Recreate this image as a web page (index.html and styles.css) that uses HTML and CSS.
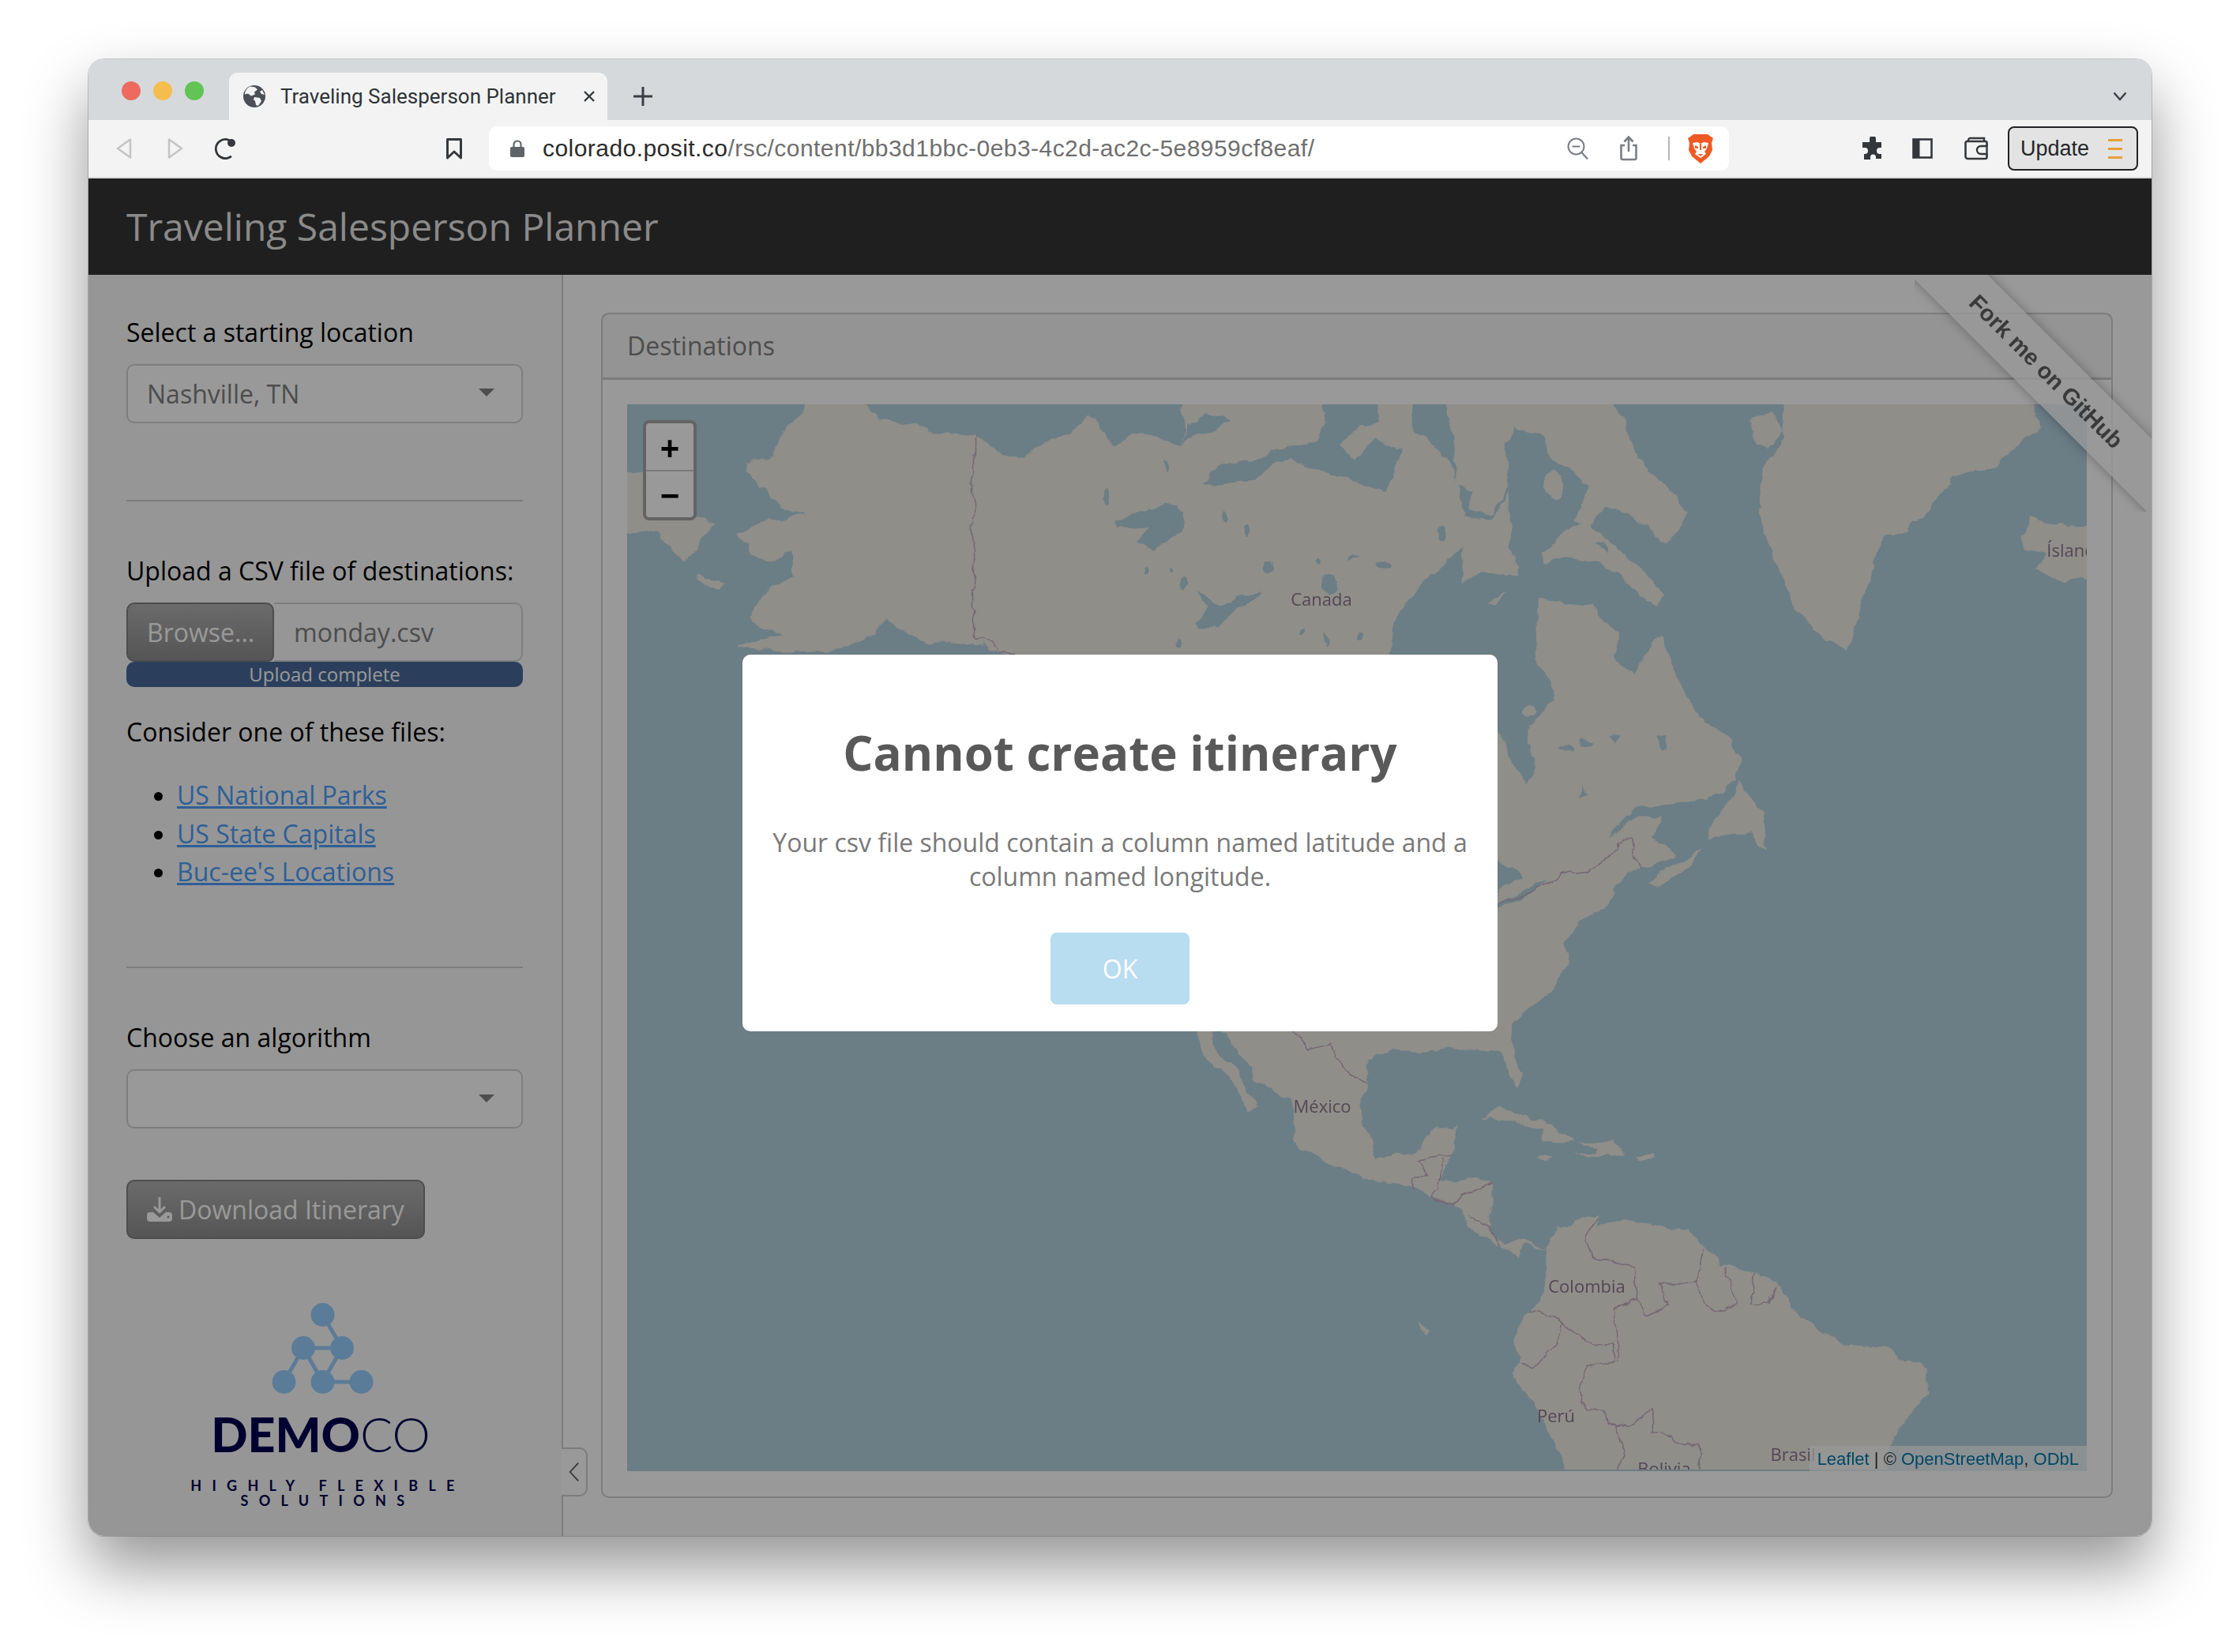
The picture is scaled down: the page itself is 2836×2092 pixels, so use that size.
FILE: index.html
```html
<!DOCTYPE html>
<html lang="en">
<head>
<meta charset="utf-8">
<title>Traveling Salesperson Planner</title>
<link rel="stylesheet" href="styles.css">
</head>
<body>
<div class="window">
  <div class="tabstrip">
    <span class="light red"></span><span class="light yellow"></span><span class="light green"></span>
    <div class="tab">
      <svg class="globe" viewBox="0 0 28 28"><circle cx="14" cy="14" r="14" fill="#4b5058"/><path d="M9 1.5l6 1 3 3-4 3 1 3-5 2-4-3-4 1C2 7 5 3 9 1.5zM14 15l7 1 2 4-4 6-3-1-1-5-2-2zM24 6l3 6-4-1-2-3z" fill="#f3f3f3"/></svg>
      <span class="tab-title">Traveling Salesperson Planner</span>
      <svg class="tab-x" viewBox="0 0 16 16"><path d="M2 2l12 12M14 2L2 14" stroke="#33373c" stroke-width="2.4" fill="none"/></svg>
    </div>
    <svg class="newtab" viewBox="0 0 24 24"><path d="M12 0v24M0 12h24" stroke="#3a3e43" stroke-width="3" fill="none"/></svg>
    <svg class="tabmenu" viewBox="0 0 18 12"><path d="M1.5 1.5L9 10l7.500-8.500" stroke="#3a3e43" stroke-width="2.400" fill="none"/></svg>
  </div>
  <div class="toolbar">
    <svg class="tb back" viewBox="0 0 20 26"><path d="M18 1.500v23L2 13z" fill="none" stroke="#c4c4c4" stroke-width="2.500" stroke-linejoin="round"/></svg>
    <svg class="tb fwd" viewBox="0 0 20 26"><path d="M2 1.500v23L18 13z" fill="none" stroke="#c4c4c4" stroke-width="2.500" stroke-linejoin="round"/></svg>
    <svg class="tb reload" viewBox="0 0 28 28"><path d="M21 24.500A12 12 0 1 1 19 3.500" fill="none" stroke="#34383d" stroke-width="2.800" stroke-linecap="round"/><circle cx="22" cy="7" r="5" fill="#34383d"/></svg>
    <svg class="tb bookmark" viewBox="0 0 22 28"><path d="M2.500 2.500h17V26L11 18l-8.500 8z" fill="none" stroke="#34383d" stroke-width="3" stroke-linejoin="round"/></svg>
    <div class="urlbar">
      <svg class="lock" viewBox="0 0 18 22"><path d="M4.500 10V6a4.500 4.500 0 0 1 9 0v4" fill="none" stroke="#5f6368" stroke-width="2.200"/><rect y="9" width="18" height="13" rx="2" fill="#5f6368"/></svg>
      <span class="url"><span class="host">colorado.posit.co</span>/rsc/content/bb3d1bbc-0eb3-4c2d-ac2c-5e8959cf8eaf/</span>
      <svg class="tb zoomout" viewBox="0 0 28 28"><circle cx="11.500" cy="11.500" r="10" fill="none" stroke="#7a7e83" stroke-width="2"/><path d="M6.500 11.500h10M18.500 19l7.500 8.500" stroke="#7a7e83" stroke-width="2.200" fill="none"/></svg>
      <svg class="tb share" viewBox="0 0 24 32"><path d="M12 20V2M6.500 7.500L12 1.500l5.500 6M7 12H2.500v16a2 2 0 0 0 2 2h15a2 2 0 0 0 2-2V12H17" fill="none" stroke="#7a7e83" stroke-width="2.600"/></svg>
      <span class="url-sep"></span>
      <svg class="tb brave" viewBox="0 0 32 38"><path d="M7 1h18l4 3 3 2-2 6 1 9-4 8-11 9-11-9-4-8 1-9L0 6l3-2z" fill="#ef5a24"/><path d="M6 12l6-1 4 2 4-2 6 1-2 7-3 4 2 3-7 5-7-5 2-3-3-4z" fill="#fff"/><path d="M9 15l4 2v2H9zM23 15l-4 2v2h4zM13 26h6l-3 3zM15 13h2v8h-2z" fill="#ef5a24"/></svg>
    </div>
    <svg class="tb puzzle" viewBox="0 0 28 30"><path d="M10 3a4 4 0 0 1 8 0v4h7v7h-2a3.500 3.500 0 0 0 0 8h2v6h-7v-2a3.500 3.500 0 0 0-7 0v3H3v-7h1a4 4 0 0 0 0-8H1V7h9z" fill="#33373c"/></svg>
    <svg class="tb sidepanel" viewBox="0 0 26 26"><rect x="1.500" y="1.500" width="23" height="23" fill="none" stroke="#33373c" stroke-width="2.600"/><rect x="1.500" y="1.500" width="8" height="23" fill="#33373c"/></svg>
    <svg class="tb wallet" viewBox="0 0 30 30"><path d="M5 6V4.500A2.500 2.500 0 0 1 7.500 2H25v4" fill="none" stroke="#33373c" stroke-width="2.400"/><path d="M1.500 8v17a3 3 0 0 0 3 3h22a2 2 0 0 0 2-2v-4M1.500 8a2 2 0 0 1 2-2h23a2 2 0 0 1 2 2v4" fill="none" stroke="#33373c" stroke-width="2.600"/><path d="M28.500 12H21a5 5 0 0 0 0 10h7.500z" fill="none" stroke="#33373c" stroke-width="2.400"/></svg>
    <div class="update"><span>Update</span><i class="burger"></i></div>
  </div>

  <div class="app">
    <header class="app-head">Traveling Salesperson Planner</header>
    <div class="app-body">
      <aside class="sidebar">
        <label class="lbl first">Select a starting location</label>
        <div class="select"><span>Nashville, TN</span><i class="caret"></i></div>
        <hr class="rule one">
        <label class="lbl">Upload a CSV file of destinations:</label>
        <div class="file"><span class="browse">Browse...</span><span class="fname">monday.csv</span></div>
        <div class="progress">Upload complete</div>
        <p class="lbl consider">Consider one of these files:</p>
        <ul class="links">
          <li><a href="#">US National Parks</a></li>
          <li><a href="#">US State Capitals</a></li>
          <li><a href="#">Buc-ee's Locations</a></li>
        </ul>
        <hr class="rule two">
        <label class="lbl">Choose an algorithm</label>
        <div class="select"><span></span><i class="caret low"></i></div>
        <div class="download">
          <svg viewBox="0 0 32 32" class="dl-icon"><path d="M16 1v19M9 13l7 7 7-7" fill="none" stroke="#fff" stroke-width="3"/><path d="M0 24a4 4 0 0 1 4-4h4l8 7 8-7h4a4 4 0 0 1 4 4v4a4 4 0 0 1-4 4H4a4 4 0 0 1-4-4z" fill="#fff"/><circle cx="27" cy="26" r="1.500" fill="#9a9a9a"/></svg>
          <span>Download Itinerary</span>
        </div>
        <div class="logo">
          <svg class="logo-mark" viewBox="0 0 130 116"><g fill="#98cffd"><path d="M64 15L88.500 57 64 100 39.500 57H88.500M39.500 57L15 100M64 100H113" fill="none" stroke="#98cffd" stroke-width="5"/><circle cx="64" cy="15" r="15"/><circle cx="39.500" cy="57" r="15"/><circle cx="88.500" cy="57" r="15"/><circle cx="15" cy="100" r="15"/><circle cx="64" cy="100" r="15"/><circle cx="113" cy="100" r="15"/></g></svg>
          <div class="logo-name"><b>DEMO</b><span>CO</span></div>
          <div class="logo-tag">HIGHLY FLEXIBLE<br>SOLUTIONS</div>
        </div>
        <div class="collapse"><svg viewBox="0 0 16 28"><path d="M14 1L2 14l12 13" fill="none" stroke="#5a5a5a" stroke-width="2"/></svg></div>
      </aside>
      <main class="main">
        <section class="card">
          <div class="card-head">Destinations</div>
          <div class="card-body">
            <div class="map">
              <svg class="map-svg" viewBox="794 512 1848 1349">
                <defs>
                  <filter id="coast" filterUnits="userSpaceOnUse" x="794" y="512" width="1848" height="1349">
                    <feTurbulence type="fractalNoise" baseFrequency=".035" numOctaves="4" seed="4" result="n"/>
                    <feDisplacementMap in="SourceGraphic" in2="n" scale="16" xChannelSelector="R" yChannelSelector="G"/>
                    <feGaussianBlur stdDeviation=".7"/>
                  </filter>
                </defs>
                <g filter="url(#coast)">
                <g class="land" transform="translate(780 380) scale(.7016 .3333)">
                  <polygon points="-40,640 50,660 60,800 140,820 180,850 145,930 125,1000 100,950 70,890 -40,870"/>
                  <polygon points="345,330 420,330 470,440 570,490 640,525 735,610 760,560 830,480 855,440 895,555 930,510 1000,530 1060,580 1090,635 1065,680 1090,710 1150,680 1300,700 1300,1500 900,1500 800,1400 690,1346 660,1310 550,1290 490,1225 420,1330 300,1340 240,1320 220,1300 300,1280 240,1210 245,1180 280,1090 325,1050 320,960 280,990 240,970 240,930 210,890 240,880 275,830 340,820 300,790 280,740 235,650 235,620 285,590 300,500 335,440"/>
                  <polygon points="1020,330 1245,330 1280,500 1215,590 1170,610 1090,630 1030,520 1040,480 1120,460"/>
                  <polygon points="148,1050 195,1080 185,1100 150,1070"/>
                </g>
                <g class="land" transform="translate(1500 500) scale(.7334 .6378)">
                  <polygon points="-100,150 0,100 -10,-40 380,-40 400,80 460,130 470,180 480,240 530,250 560,195 560,300 578,360 520,350 475,375 485,300 440,345 410,370 370,430 355,490 350,530 400,640 540,660 560,720 590,775 605,740 590,670 635,605 630,570 605,530 610,410 650,410 700,420 745,470 745,520 775,555 810,490 820,480 850,550 875,625 935,680 960,720 955,770 905,800 830,810 785,815 745,850 725,885 770,840 825,840 805,880 850,910 845,920 780,940 745,970 725,1020 680,1045 660,1090 660,1130 630,1190 590,1220 565,1260 560,1300 400,1300 60,1264 -100,1100"/>
                  <polygon points="440,-40 700,-40 755,50 785,130 830,180 870,230 830,300 800,260 770,240 745,225 720,220 700,270 670,250 690,200 700,180 640,130 610,80 570,60 550,100 560,180 530,240 490,230 500,190 470,180 470,120"/>
                  <polygon points="610,310 680,260 720,270 740,300 790,350 830,400 815,420 760,370 720,335 660,320 620,335"/>
                  <polygon points="520,410 555,390 540,415"/>
                  <polygon points="1040,-40 1440,-40 1480,60 1400,140 1330,160 1300,200 1250,270 1210,280 1190,330 1165,440 1145,505 1080,470 1050,420 1020,330 990,230 1000,150 1030,100"/>
                  <polygon points="975,50 1010,30 1030,70 1010,105 985,90"/>
                  <polygon points="1445,280 1460,240 1500,260 1620,255 1620,355 1520,370 1470,345 1490,310 1450,300"/>
                  <polygon points="905,860 960,770 1000,830 1005,900 970,870 905,880"/>
                  <polygon points="800,975 815,950 870,920 890,900 880,930 820,975"/>
                </g>
                <g class="land" transform="translate(1400 1300) scale(.829 .3954)">
                  <polygon points="185,15 230,170 290,240 285,360 330,430 410,495 465,510 500,540 540,580 555,640 600,700 630,740 640,690 670,720 640,680 610,695 590,670 585,620 590,510 560,490 510,490 525,410 540,320 495,330 480,400 410,420 395,320 390,230 400,180 400,110 440,60 500,40 590,20 605,100 630,200 635,150 615,15"/>
                  <polygon points="140,15 155,110 195,190 222,270 232,255 200,150 165,60 160,15"/>
                  <polygon points="575,300 600,265 640,280 680,320 715,360 670,370 665,335 620,300 590,290"/>
                  <polygon points="725,370 770,370 795,410 750,415 715,410 750,400 750,385"/>
                  <polygon points="812,410 832,410 832,425 815,425"/>
                  <polygon points="660,410 685,420 670,430"/>
                  <polygon points="480,950 495,975 485,985"/>
                  <polygon points="670,730 690,640 750,600 750,640 790,620 850,650 895,650 910,700 940,770 990,780 1030,830 1050,910 1090,970 1130,1020 1190,1030 1250,1100 1255,1180 1210,1300 1200,1340 1180,1500 720,1500 690,1350 650,1200 620,1110 630,1050 625,990 650,910 670,860"/>
                </g>
                <g class="water" transform="translate(780 380) scale(.7016 .3333)">
                  <polygon points="905,840 990,775 1025,810 1020,880 970,945 935,930 960,870 910,860"/>
                  <polygon points="1040,1230 1070,1170 1050,1110 1090,1160 1130,1110 1165,1105 1120,1170 1090,1240 1050,1255"/>
                  <ellipse cx="1020" cy="1075" rx="8" ry="20"/>
                  <ellipse cx="1290" cy="1085" rx="12" ry="35"/>
                  <ellipse cx="885" cy="745" rx="6" ry="24"/><ellipse cx="990" cy="635" rx="3" ry="24"/>
                  <ellipse cx="1098" cy="830" rx="6" ry="24"/><ellipse cx="1135" cy="885" rx="5" ry="26"/>
                  <ellipse cx="1175" cy="1020" rx="8" ry="28"/><ellipse cx="1330" cy="975" rx="14" ry="6"/>
                  <ellipse cx="1385" cy="1005" rx="16" ry="8"/><ellipse cx="1270" cy="1000" rx="5" ry="14"/>
                  <ellipse cx="1340" cy="1270" rx="4" ry="20"/><ellipse cx="1280" cy="1285" rx="4" ry="24"/>
                  <ellipse cx="1240" cy="1260" rx="4" ry="14"/><ellipse cx="1015" cy="1300" rx="4" ry="16"/>
                  <ellipse cx="960" cy="1020" rx="4" ry="12"/><ellipse cx="1000" cy="1025" rx="3" ry="10"/>
                  <ellipse cx="1490" cy="890" rx="8" ry="28"/>
                </g>
                <g class="water" transform="translate(1500 500) scale(.7334 .6378)">
                  <polygon points="0,60 40,35 85,50 50,70 0,95"/>
                  <polygon points="30,175 60,140 150,120 180,100 230,95 245,50 210,-40 330,-40 335,55 305,60 265,100 295,130 330,85 375,110 345,190 300,165 230,155 180,125 120,165 60,175"/>
                  <polygon points="540,920 580,960 550,975 540,1000"/>
                  <polygon points="540,1025 600,985 630,965 590,975 540,1015"/>
                  <polygon points="710,300 725,290 730,320"/>
                  <polygon points="765,480 775,475 770,495"/>
                  <polygon points="815,685 835,680 830,705"/>
                  <polygon points="735,675 755,670 745,695"/>
                  <polygon points="690,775 680,800 695,790"/>
                  <ellipse cx="660" cy="705" rx="18" ry="6"/><ellipse cx="690" cy="690" rx="10" ry="6"/>
                </g>
                <g class="land" transform="translate(1500 500) scale(.7334 .6378)">
                  <ellipse cx="640" cy="180" rx="18" ry="26"/>
                  <ellipse cx="595" cy="625" rx="12" ry="12"/>
                </g>
                <g class="border">
                  <polyline transform="translate(780 380) scale(.7016 .3333)" vector-effect="non-scaling-stroke" points="645,525 645,1290 680,1300 690,1345 720,1345"/>
                  <polyline transform="translate(1500 500) scale(.7334 .6378)" vector-effect="non-scaling-stroke" points="540,1015 595,985 640,965 660,945 715,940 745,885 770,885 775,925 785,940"/>
                  <polyline transform="translate(1500 500) scale(.7334 .6378)" vector-effect="non-scaling-stroke" points="190,1264 215,1300 250,1290 285,1350 315,1365"/>
                  <g transform="translate(1400 1300) scale(.829 .3954)">
                    <polyline vector-effect="non-scaling-stroke" points="470,530 470,480 490,480 480,430 525,410"/>
                    <polyline vector-effect="non-scaling-stroke" points="510,425 510,520 500,540 530,570 545,540 590,510"/>
                    <polyline vector-effect="non-scaling-stroke" points="555,600 585,640 600,700"/>
                    <polyline vector-effect="non-scaling-stroke" points="750,610 730,680 745,740 805,770 810,880 825,925 860,890 850,830 900,810 910,710"/>
                    <polyline vector-effect="non-scaling-stroke" points="900,800 915,890 930,915 965,890 945,800 950,780"/>
                    <polyline vector-effect="non-scaling-stroke" points="990,780 990,880 1010,890 1025,830"/>
                    <polyline vector-effect="non-scaling-stroke" points="650,910 700,950 730,1015 770,1020 775,1070 740,1090 720,1160 735,1225 765,1230 770,1270 800,1270 835,1235 840,1300 905,1345 905,1420"/>
                    <polyline vector-effect="non-scaling-stroke" points="810,880 775,905 780,1070"/>
                    <polyline vector-effect="non-scaling-stroke" points="700,950 690,1020 650,1090 630,1070"/>
                    <polyline vector-effect="non-scaling-stroke" points="780,1270 790,1340 785,1420"/>
                  </g>
                </g>
                </g>
                <text class="place" x="1673" y="767">Canada</text>
                <text class="place" x="1674" y="1409">México</text>
                <text class="place" x="2009" y="1637">Colombia</text>
                <text class="place" x="1970" y="1801">Perú</text>
                <text class="place" x="2107" y="1868">Bolivia</text>
                <text class="place" x="2270" y="1850">Brasil</text>
                <text class="place" x="2622" y="705">Ísland</text>
              </svg>
              <div class="zoomctl"><span class="z-btn">+</span><span class="z-btn">−</span></div>
              <div class="attrib"><a href="#">Leaflet</a> <i>|</i> © <a href="#">OpenStreetMap</a>, <a href="#">ODbL</a></div>
            </div>
          </div>
        </section>
      </main>
    </div>
    <div class="ribbon-clip"><div class="ribbon">Fork me on GitHub</div></div>
    <div class="backdrop">
      <div class="modal">
        <h2>Cannot create itinerary</h2>
        <p>Your csv file should contain a column named latitude and a column named longitude.</p>
        <span class="ok">OK</span>
      </div>
    </div>
  </div>
</div>
</body>
</html>
```
FILE: styles.css
```css
* { box-sizing: border-box; }
html, body { margin: 0; height: 2092px; background: #fff; overflow: hidden; }
body { padding: 75px 112px 0; font-family: "Open Sans", sans-serif; }
.window { height: 1870px; border-radius: 20px; overflow: hidden; display: flex; flex-direction: column; box-shadow: 0 0 0 1px rgba(0,0,0,.18), 0 40px 80px rgba(0,0,0,.42); }

/* browser chrome */
.tabstrip { height: 77px; flex: none; background: #d5d9dc; display: flex; align-items: flex-start; padding-left: 42px; }
.light { width: 24px; height: 24px; border-radius: 50%; margin: 28px 16px 0 0; }
.red { background: #ee6a5f; } .yellow { background: #f5bd4f; } .green { background: #61c454; }
.tab { width: 479px; height: 60px; margin: 17px 0 0 16px; background: #f3f3f3; border-radius: 11px 11px 0 0; display: flex; align-items: center; padding-left: 18px; }
.globe { width: 28px; height: 28px; margin-right: 19px; }
.tab-title { font: 26px Roboto, sans-serif; color: #2f3337; width: 383px; white-space: nowrap; }
.tab-x { width: 16px; height: 16px; }
.newtab { width: 24px; height: 24px; margin: 35px 0 0 33px; }
.tabmenu { width: 18px; height: 12px; margin: 41px 0 0 1849px; flex: none; }
.toolbar { height: 74px; flex: none; background: #f3f3f3; border-bottom: 2px solid #dcdcdc; display: flex; align-items: center; padding-left: 35px; }
.tb { flex: none; }
.back { width: 20px; height: 26px; }
.fwd { width: 20px; height: 26px; margin-left: 45px; }
.reload { width: 28px; height: 28px; margin-left: 39px; }
.bookmark { width: 22px; height: 28px; margin-left: 265px; }
.urlbar { width: 1570px; height: 56px; margin-left: 33px; background: #fff; border-radius: 10px; display: flex; align-items: center; padding-left: 27px; }
.lock { width: 18px; height: 22px; flex: none; }
.url { font: 30px "Liberation Sans", sans-serif; letter-spacing: .45px; color: #6f6f6f; margin-left: 23px; width: 1297px; white-space: nowrap; }
.host { color: #2b2b2b; }
.zoomout { width: 28px; height: 28px; }
.share { width: 24px; height: 32px; margin-left: 38px; }
.url-sep { width: 2px; height: 30px; background: #b5b5b5; margin-left: 38px; }
.brave { width: 32px; height: 38px; margin-left: 23px; }
.puzzle { width: 28px; height: 30px; margin-left: 168px; }
.sidepanel { width: 26px; height: 26px; margin-left: 36px; }
.wallet { width: 30px; height: 30px; margin-left: 40px; }
.update { width: 165px; height: 56px; margin-left: 25px; border: 2px solid #202225; border-radius: 8px; background: #e3e3e3; display: flex; align-items: center; padding-left: 14px; font: 27px "Liberation Sans", sans-serif; color: #24272a; }
.burger { width: 18px; height: 3px; background: #e8a035; margin-left: 24px; box-shadow: 0 -11px 0 #e8a035, 0 11px 0 #e8a035; }

/* app (everything is drawn light, then dimmed by the modal backdrop) */
.app { flex: 1; position: relative; display: flex; flex-direction: column; background: #fff; min-height: 0; }
.app-head { height: 122px; flex: none; background: #343434; color: #e6e6e6; font-size: 48px; line-height: 122px; padding-left: 48px; white-space: nowrap; }
.app-body { flex: 1; display: flex; min-height: 0; }
.sidebar { width: 601px; flex: none; background: #fbfbfb; border-right: 2px solid #cfcfcf; padding: 50px 49px 0 48px; position: relative; color: #000; }
.lbl { display: block; font-size: 32px; line-height: 46px; margin: 65px 0 0; white-space: nowrap; }
.lbl.first { margin-top: 0; }
.lbl.consider { margin-top: 34px; }
.select { height: 75px; margin-top: 17px; border: 2px solid #d2d2d2; border-radius: 10px; background: #fff; display: flex; align-items: center; justify-content: space-between; padding: 0 34px 0 24px; font-size: 32px; color: #808080; }
.caret { width: 0; height: 0; border-left: 10px solid transparent; border-right: 10px solid transparent; border-top: 10px solid #808080; margin-top: -4px; }
.caret.low { margin-top: 0; }
.rule { border: 0; height: 2px; background: #d0d0d0; margin: 0; }
.rule.one { margin-top: 97px; }
.rule.two { margin-top: 95px; }
.file { height: 75px; margin-top: 17px; display: flex; font-size: 32px; }
.browse { width: 187px; background: linear-gradient(#b2b2b2, #8e8e8e); border: 2px solid #808080; border-radius: 10px 10px 8px 10px; color: #fff; display: flex; align-items: center; padding-left: 24px; }
.fname { flex: 1; border: 2px solid #d2d2d2; border-left: 0; border-radius: 0 10px 10px 0; color: #808080; display: flex; align-items: center; padding-left: 25px; }
.progress { height: 32px; background: #496a99; border-radius: 10px; color: #fff; font-size: 24px; line-height: 32px; text-align: center; }
.links { margin: 33px 0 0; padding: 0 0 0 64px; font-size: 32px; line-height: 48.500px; }
.links a { color: #4e9efa; text-decoration-thickness: 3px; }
.download { width: 378px; height: 75px; margin-top: 65px; border: 2px solid #808080; border-radius: 10px; background: linear-gradient(#b2b2b2, #8e8e8e); display: flex; align-items: center; padding-left: 24px; color: #fff; font-size: 32px; white-space: nowrap; }
.dl-icon { width: 32px; height: 32px; margin-right: 8px; }
.logo { margin-top: 81px; text-align: center; color: #000050; }
.logo-mark { display: block; width: 130px; height: 116px; margin: 0 auto; transform: translateX(-1.500px); }
.logo-name { font-family: Lato, sans-serif; font-size: 61px; line-height: 62px; margin-top: 19px; padding-right: 10px; }
.logo-name b { font-weight: 900; }
.logo-name span { font-weight: 300; }
.logo-tag { font: 700 18px/19px Lato, sans-serif; letter-spacing: 13.300px; margin-top: 25px; padding-left: 8px; }
.collapse { position: absolute; right: -33px; top: 1485px; width: 33px; height: 62px; background: #fff; border: 2px solid #cfcfcf; border-left: 0; border-radius: 0 10px 10px 0; display: flex; align-items: center; justify-content: center; }
.collapse svg { width: 14px; height: 26px; }
.main { flex: 1; min-width: 0; padding: 48px 49px 48px 48px; display: flex; background: #fff; }
.card { flex: 1; min-width: 0; border: 2px solid #d0d0d0; border-radius: 10px; display: flex; flex-direction: column; }
.card-head { height: 83px; flex: none; background: rgba(0,0,0,.03); border-bottom: 3px solid #cdcdcd; padding-left: 31px; font-size: 32px; line-height: 80px; color: #808080; }
.card-body { flex: 1; min-height: 0; padding: 31px 31px 32px; display: flex; }
.map { flex: 1; position: relative; overflow: hidden; background: #b2d0de; }
.map-svg { display: block; width: 1848px; height: 1349px; }
.land { fill: #efede5; stroke: #efede5; stroke-width: 1; }
.water { fill: #b2d0de; }
.border polyline { fill: none; stroke: #c3a9c0; stroke-width: 1.500; }
.place { font: 22px "Open Sans", sans-serif; fill: #8c7590; text-anchor: middle; }
.zoomctl { position: absolute; left: 20px; top: 20px; width: 68px; height: 127px; border: 4px solid rgba(0,0,0,.35); border-radius: 8px; background: #fff; display: flex; flex-direction: column; }
.z-btn { flex: 1; display: flex; align-items: center; justify-content: center; padding-top: 5px; color: #000; font: 700 42px "Liberation Sans", sans-serif; }
.z-btn + .z-btn { border-top: 2px solid #ccc; }
.attrib { position: absolute; right: 0; bottom: 0; height: 32px; padding: 0 10px; background: rgba(255,255,255,.7); font: 22px/33px "Liberation Sans", sans-serif; color: #333; white-space: nowrap; }
.attrib a { color: #0078a8; text-decoration: none; }
.attrib i { font-style: normal; color: #333; }

/* ribbon */
.ribbon-clip { position: absolute; top: 122px; right: 0; width: 300px; height: 300px; overflow: hidden; }
.ribbon { position: absolute; left: -78px; top: 94px; width: 500px; height: 69px; transform: rotate(45deg); background: rgba(255,255,255,.78); box-shadow: 0 0 14px rgba(0,0,0,.3); color: #616161; font: 700 29px/69px "Liberation Sans", sans-serif; text-align: center; padding-right: 16px; white-space: nowrap; }

/* modal */
.backdrop { position: absolute; inset: 0; background: rgba(0,0,0,.4); display: flex; justify-content: center; align-items: flex-start; padding-top: 603px; }
.modal { width: 956px; height: 477px; background: #fff; border-radius: 10px; text-align: center; padding-top: 82px; color: #797979; }
.modal h2 { margin: 0; font-size: 60px; line-height: 84px; font-weight: 700; color: #595959; white-space: nowrap; }
.modal p { margin: 50px 30px 0; font-size: 32px; line-height: 43px; }
.ok { display: block; width: 176px; height: 91px; margin: 50px auto 0; background: #b8dcf0; border-radius: 8px; color: #fff; font-size: 32px; line-height: 91px; }
```
